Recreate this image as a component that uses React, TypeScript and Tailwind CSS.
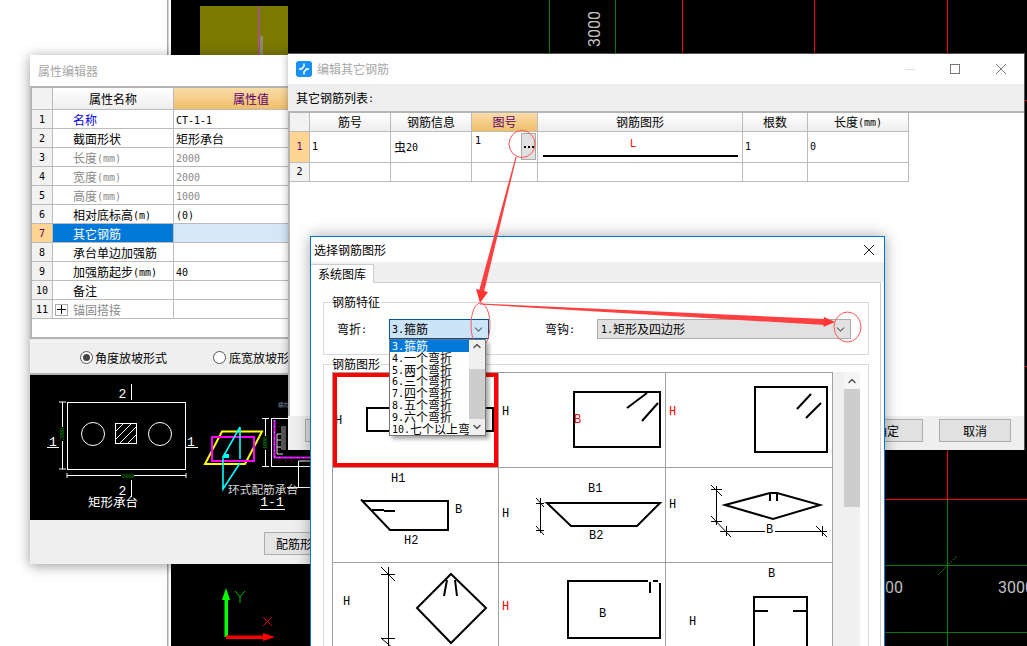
import type { ReactNode } from "react";
import { ChevronDown, ChevronUp } from "lucide-react";

// SimSun-like metrics: latin glyphs are half the width of a 12px CJK glyph
function Mix({ text }: { text: string }) {
  const parts = text.split(/([\x00-\x7f]+)/).filter(Boolean);
  return (
    <>
      {parts.map((p, i) =>
        /^[\x00-\x7f]/.test(p) ? (
          <span key={i} className="whitespace-pre align-[1px] text-[10px] [font-family:'DejaVu_Sans_Mono',monospace]">
            {p}
          </span>
        ) : (
          <span key={i}>{p}</span>
        ),
      )}
    </>
  );
}

const props = [
  { name: "名称", value: "CT-1-1", nameCls: "text-[#0000ee]" },
  { name: "截面形状", value: "矩形承台" },
  { name: "长度(mm)", value: "2000", nameCls: "text-[#8a8a8a]", valCls: "text-[#8a8a8a]" },
  { name: "宽度(mm)", value: "2000", nameCls: "text-[#8a8a8a]", valCls: "text-[#8a8a8a]" },
  { name: "高度(mm)", value: "1000", nameCls: "text-[#8a8a8a]", valCls: "text-[#8a8a8a]" },
  { name: "相对底标高(m)", value: "(0)" },
  { name: "其它钢筋", value: "", active: true },
  { name: "承台单边加强筋", value: "" },
  { name: "加强筋起步(mm)", value: "40" },
  { name: "备注", value: "" },
  { name: "锚固搭接", value: "", nameCls: "text-[#8a8a8a]", plus: true },
];

const editHeaders = ["筋号", "钢筋信息", "图号", "钢筋图形", "根数", "长度(mm)"];

const bends = ["3.箍筋", "4.一个弯折", "5.两个弯折", "6.三个弯折", "7.四个弯折", "8.五个弯折", "9.六个弯折", "10.七个以上弯折"];

function CadBackground() {
  return (
    <svg className="absolute inset-0" width="1027" height="646" viewBox="0 0 1027 646">
      <rect x="167" y="0" width="1.5" height="646" fill="#a8a8a8" />
      <rect x="171" y="0" width="856" height="646" fill="#000" />
      <rect x="200" y="6" width="88" height="50" fill="#7a7a00" />
      <rect x="258" y="6" width="1.5" height="50" fill="#b04a9a" />
      <rect x="260" y="36" width="3" height="20" fill="#8c8c6a" />
      <path d="M549.5 0V54M615.5 0V54" stroke="#0a7a0a" />
      <path d="M682.5 0V54M814.5 0V54M947.5 0V54" stroke="#ff0000" />
      <path d="M1024 100.5H1027M1024 366.5H1027" stroke="#ff0000" />
      <text x="0" y="0" transform="translate(600 47) rotate(-90)" fontSize="16" fill="#c4c4c4" fontFamily="Roboto, sans-serif">
        3000
      </text>
      <path d="M885 499.5H1027M947.5 450V499" stroke="#ff0000" />
      <path d="M885 565.5H1027M885 632.5H1027M947.5 499V646" stroke="#0a7a0a" />
      <path d="M938 575L957 556" stroke="#0a8a0a" strokeDasharray="2 1" />
      <text x="885" y="593" fontSize="16" fill="#c4c4c4" fontFamily="Roboto, sans-serif">
        00
      </text>
      <text x="998" y="593" fontSize="16" fill="#c4c4c4" fontFamily="Roboto, sans-serif">
        3000
      </text>
      {/* axis marker */}
      <rect x="224.5" y="596" width="3.5" height="41" fill="#00ff00" />
      <path d="M226 588L230 600H222Z" fill="#00ff00" />
      <rect x="226" y="635.5" width="40" height="3.5" fill="#ff0000" />
      <path d="M275 637L263 633V641Z" fill="#ff0000" />
      <path d="M235 591L240 597L245 591M240 597V603" stroke="#00c800" fill="none" />
      <path d="M263 617L272 626M272 617L263 626" stroke="#e00000" fill="none" />
    </svg>
  );
}

function PreviewDrawing() {
  return (
    <svg className="block shrink-0 bg-black" width="282" height="145" viewBox="30 375 282 145">
      <g stroke="#fff" fill="none">
        <rect x="67.5" y="402.5" width="118" height="67" />
        <circle cx="93" cy="434" r="11.5" />
        <circle cx="160" cy="434" r="11.5" />
        <rect x="115.5" y="423.5" width="21" height="20" />
        <path d="M116 431L123 424M116 439L131 424M120 443L136 427M128 443L136 435" />
        <path d="M131.5 384V400M131.5 480V497M47 447.5H59M186 447.5H198" />
        <path d="M62.5 402V469M59 402H66M59 469H66M67 475.5H186M67 473V478M186 473V478" />
      </g>
      <g fill="#fff" fontSize="13" fontFamily="Liberation Mono, monospace" textAnchor="middle">
        <text x="122.5" y="398">2</text>
        <text x="122.5" y="495">2</text>
        <text x="53" y="446">1</text>
        <text x="191" y="446">1</text>
      </g>
      <text x="88" y="507" fill="#fff" fontSize="12.5" fontFamily="Noto Sans CJK SC, sans-serif">
        矩形承台
      </text>
      <rect x="121" y="473" width="13" height="5" fill="#000" />
      <text x="122" y="478" fill="#0c9a0c" fontSize="5" fontFamily="Liberation Mono, monospace">
        2000
      </text>
      <rect x="60" y="427" width="5" height="14" fill="#000" />
      <text x="0" y="0" transform="translate(64 440) rotate(-90)" fill="#0c9a0c" fontSize="5" fontFamily="Liberation Mono, monospace">
        2000
      </text>
      <path d="M222 431.5H262L245 464H205Z" stroke="#ffff00" strokeWidth="2" fill="none" />
      <rect x="212" y="437" width="42" height="24" stroke="#ff00ff" strokeWidth="2" fill="none" />
      <path d="M240 427V459M240 427L223 457V489L240 463" stroke="#00ffff" strokeWidth="1.6" fill="none" />
      <rect x="224" y="454" width="5" height="4" fill="#00ffff" />
      <g stroke="#fff" fill="none">
        <rect x="271.5" y="418.5" width="60" height="48" />
        <path d="M265.5 418V467M262 418.5H269M262 466.5H269" />
        <path d="M298.5 461V487M298.5 461H320M260 509.5H285M287 487.5H320" />
      </g>
      <rect x="263" y="436" width="5" height="14" fill="#000" />
      <text x="0" y="0" transform="translate(267 449) rotate(-90)" fill="#0c9a0c" fontSize="5" fontFamily="Liberation Mono, monospace">
        1000
      </text>
      <path d="M274.5 420V457.5H320" stroke="#ff00ff" strokeWidth="2" fill="none" />
      <path d="M274.5 420V457.5H320" stroke="#00ffff" strokeDasharray="1 5" fill="none" />
      <path d="M283 434H277V454H283M277 440H283M277 447H283" stroke="#ddd" fill="none" />
      <rect x="281" y="426" width="5" height="24" fill="#555" />
      <text x="278" y="407" fill="#8a9ab0" fontSize="5.5" fontFamily="Noto Sans CJK SC, sans-serif">
        横向
      </text>
      <text x="228" y="494" fill="#d8d8d8" fontSize="11.7" fontFamily="Noto Sans CJK SC, sans-serif">
        环式配筋承台
      </text>
      <text x="272" y="506" fill="#fff" fontSize="13" fontFamily="Liberation Mono, monospace" textAnchor="middle">
        1-1
      </text>
    </svg>
  );
}

function PropertyWindow() {
  return (
    <div className="absolute left-[30px] top-[55px] flex h-[509px] w-[282px] flex-col bg-[#efefef] shadow-[0_2px_12px_rgba(0,0,0,0.4)]">
      <div className="flex h-[31px] shrink-0 items-center bg-white pl-2 text-[#a8a8a8]">属性编辑器</div>
      <div className="h-[253px] shrink-0 border-y-2 border-l-2 border-[#b4b4b4] bg-white">
        <div className="grid grid-cols-[21px_121px_1fr]">
          <div className="h-[22px] border-r border-b border-[#bbb] bg-[#f2f2f2]" />
          <div className="flex h-[22px] items-center justify-center border-r border-b border-[#bbb] bg-gradient-to-b from-white to-[#eeeeee]">
            属性名称
          </div>
          <div className="flex h-[22px] items-center border-b border-[#bbb] bg-gradient-to-b from-[#fbdca8] to-[#eebf68] pl-[59px] text-[#5c0070]">
            属性值
          </div>
          {props.map((r, i) => (
            <div key={r.name} className="contents">
              <div
                className={`flex h-[19px] items-center justify-center border-r border-b border-[#bbb] pt-px ${r.active ? "bg-[#ffd591] text-[#5c0070]" : "bg-[#f2f2f2]"}`}
              >
                <Mix text={String(i + 1)} />
              </div>
              <div
                className={`flex h-[19px] items-center border-r border-b border-[#bbb] pt-px ${r.active ? "bg-[#0078d7] text-white" : r.nameCls ?? ""} ${r.plus ? "pl-[2px]" : "pl-5"}`}
              >
                {r.plus && (
                  <span className="mr-[5px] flex h-[12px] w-[13px] items-center justify-center border border-[#aaa] text-black">
                    <svg width="9" height="9" viewBox="0 0 9 9">
                      <path d="M0 4.5H9M4.5 0V9" stroke="#000" />
                    </svg>
                  </span>
                )}
                <span>
                  <Mix text={r.name} />
                </span>
              </div>
              <div className={`flex h-[19px] items-center border-b border-[#bbb] pl-[2px] pt-px ${r.active ? "bg-[#d6e8f7]" : ""} ${r.valCls ?? ""}`}>
                <span>
                  <Mix text={r.value} />
                </span>
              </div>
            </div>
          ))}
        </div>
      </div>
      <div className="mt-[2px] flex h-[34px] shrink-0 items-center border-t border-b-2 border-t-[#f8f8f8] border-b-[#b4b4b4] pl-[50px]">
        <span className="flex items-center justify-center rounded-full border border-[#555] bg-white p-[2px]">
          <span className="h-[7px] w-[7px] rounded-full bg-[#444]" />
        </span>
        <span className="ml-[1px] w-[119px] pl-[1px]">角度放坡形式</span>
        <span className="h-[13px] w-[13px] shrink-0 rounded-full border border-[#555] bg-white" />
        <span className="ml-[3px] whitespace-nowrap">底宽放坡形式</span>
      </div>
      <PreviewDrawing />
      <div className="flex flex-1 items-start pl-[234px] pt-3">
        <button className="flex h-[23px] w-[72px] shrink-0 items-center justify-center border border-[#adadad] bg-[#e5e5e5]">配筋形式</button>
      </div>
    </div>
  );
}

function EditWindow() {
  return (
    <div className="absolute left-[288px] top-[53px] flex h-[397px] w-[737px] flex-col border-t border-r border-[#555] bg-white shadow-[0_0_8px_rgba(0,0,0,0.3)]">
      <div className="flex h-[30px] shrink-0 items-center bg-white pl-2">
        <svg width="16" height="16" viewBox="0 0 16 16">
          <rect width="16" height="16" rx="3" fill="#1890f5" />
          <path d="M8 2.5V6M8 10V13.5M3 8H6.5M9.5 8H13M8 6C6.5 6 6 7 6 8M8 10C9.5 10 10 9 10 8" stroke="#fff" strokeWidth="1.5" fill="none" />
        </svg>
        <span className="ml-[5px] text-[#a8a8a8]">编辑其它钢筋</span>
        <div className="ml-auto flex items-center pr-[18px]">
          <span className="mr-[35px] h-px w-[10px] bg-[#ddd]" />
          <span className="mr-[36px] h-[10px] w-[10px] border border-[#777]" />
          <svg width="10" height="10" viewBox="0 0 10 10">
            <path d="M0 0L10 10M10 0L0 10" stroke="#777" />
          </svg>
        </div>
      </div>
      <div className="flex h-[27px] shrink-0 items-center bg-[#efefef] pl-2">
        <span>
          <Mix text="其它钢筋列表:" />
        </span>
      </div>
      <div className="flex-1 border-t-2 border-l-2 border-[#b4b4b4]">
        <div className="grid w-[619px] grid-cols-[20px_81px_81px_66px_205px_65px_101px]">
          <div className="h-[19px] border-r border-b border-[#bbb] bg-[#f2f2f2]" />
          {editHeaders.map((h) => (
            <div
              key={h}
              className={`flex h-[19px] items-center justify-center border-r border-b border-[#bbb] bg-gradient-to-b ${h === "图号" ? "from-[#fbdca8] to-[#eebf68] text-[#5c0070]" : "from-white to-[#eeeeee]"}`}
            >
              <span>
                <Mix text={h} />
              </span>
            </div>
          ))}
          <div className="flex h-[31px] items-center justify-center border-r border-b border-[#bbb] bg-[#ffd591] text-[#5c0070]">
            <Mix text="1" />
          </div>
          <div className="flex h-[31px] items-center border-r border-b border-[#bbb] pl-[2px]">
            <Mix text="1" />
          </div>
          <div className="flex h-[31px] items-center border-r border-b border-[#bbb] pl-[3px]">
            <span>
              <Mix text="虫20" />
            </span>
          </div>
          <div className="relative h-[31px] border-r border-b border-[#bbb] pl-[3px] pt-[2px]">
            <Mix text="1" />
            <span className="absolute right-[1px] top-[1px] flex h-[27px] w-[15px] items-center justify-center gap-[2px] border border-[#aaa] bg-[#e1e1e1]">
              <span className="h-[2px] w-[2px] bg-black" />
              <span className="h-[2px] w-[2px] bg-black" />
              <span className="h-[2px] w-[2px] bg-black" />
            </span>
          </div>
          <div className="flex h-[31px] flex-col items-center border-r border-b border-[#bbb] pt-[5px]">
            <span className="h-[18px] pr-[14px] text-[#f00]">
              <Mix text="L" />
            </span>
            <span className="h-[2px] w-[195px] bg-black" />
          </div>
          <div className="flex h-[31px] items-center border-r border-b border-[#bbb] pl-[2px]">
            <Mix text="1" />
          </div>
          <div className="flex h-[31px] items-center border-r border-b border-[#bbb] pl-[2px]">
            <Mix text="0" />
          </div>
          <div className="flex h-[19px] items-center justify-center border-r border-b border-[#bbb] bg-[#f2f2f2]">
            <Mix text="2" />
          </div>
          {[0, 1, 2, 3, 4, 5].map((i) => (
            <div key={i} className="h-[19px] border-r border-b border-[#bbb]" />
          ))}
        </div>
      </div>
      <div className="flex h-[34px] shrink-0 items-start bg-[#efefef] pt-[3px]">
        <button className="ml-[17px] h-[23px] w-[72px] border border-[#adadad] bg-[#e1e1e1]" />
        <button className="ml-[474px] flex h-[23px] w-[72px] items-center justify-center border border-[#adadad] bg-[#e1e1e1]">确定</button>
        <button className="ml-[16px] flex h-[23px] w-[72px] items-center justify-center border border-[#adadad] bg-[#e1e1e1]">取消</button>
      </div>
    </div>
  );
}

function Cell({ x, y, w, h = 94, children }: { x: number; y: number; w: number; h?: number; children: ReactNode }) {
  return (
    <div className="border-r border-b border-[#a0a0a0]">
      <svg className="block" width={w} height={h} viewBox={`${x} ${y} ${w} ${h}`} fontFamily="Liberation Mono, monospace" fontSize="12">
        {children}
      </svg>
    </div>
  );
}

const bar = { stroke: "#000", strokeWidth: 2, fill: "none" };
const thin = { stroke: "#000", strokeWidth: 1, fill: "none" };

function ShapeGrid() {
  return (
    <div className="grid grid-cols-[166px_167px_167px] border-t border-l border-[#a0a0a0]">
      <Cell x={333} y={373} w={165}>
        <path d="M367 408H493V431H367Z" {...bar} />
        <text x="335" y="424">H</text>
        <rect x="335" y="375" width="161" height="90" fill="none" stroke="#f00" strokeWidth="4" />
      </Cell>
      <Cell x={499} y={373} w={166}>
        <text x="502" y="415">H</text>
        <text x="574" y="423" fill="#f00">B</text>
        <path d="M574 392H660V447H574Z" {...bar} />
        <path d="M627 408L647 393M642 421L658 403" {...bar} />
      </Cell>
      <Cell x={666} y={373} w={166}>
        <text x="669" y="415" fill="#f00">H</text>
        <path d="M755 387H827V452H755Z" {...bar} />
        <path d="M797 409L811 394M806 418L821 403" {...bar} />
      </Cell>

      <Cell x={333} y={468} w={165}>
        <text x="391" y="482">H1</text>
        <text x="455" y="513">B</text>
        <text x="404" y="544">H2</text>
        <path d="M361 499.5L390 530H448V501H363" {...bar} />
        <path d="M372 510H384M384 511H395" {...bar} />
      </Cell>
      <Cell x={499} y={468} w={166}>
        <text x="588" y="492">B1</text>
        <text x="589" y="539">B2</text>
        <text x="502" y="517">H</text>
        <path d="M547 503L571 526H637L660 503Z" {...bar} />
        <path d="M540.5 498V533M536 503.5H544M536 530.5H544M536 498L544 507M536 526L544 535" {...thin} />
      </Cell>
      <Cell x={666} y={468} w={166}>
        <text x="669" y="508">H</text>
        <text x="766" y="533">B</text>
        <path d="M725 505L770 493H777L820 505L773 519Z" {...bar} />
        <path d="M770 493V501M777 493V501" {...bar} />
        <path d="M716.5 486V525M711 489.5H722M711 521.5H722M711 485L722 496M711 516L731 537M720 531.5H765M775 531.5H827M726.5 526V536M822.5 526V536M816 526L827 537" {...thin} />
      </Cell>

      <Cell x={333} y={563} w={165}>
        <text x="343" y="605">H</text>
        <path d="M388.5 567V646M381 574.5H395M381 638.5H395M381 567L395 581M381 638L395 650" {...thin} />
        <path d="M451 574L486 608L451 643L417 608Z" {...bar} />
        <path d="M447 580L444 596M455 580L457 596" {...bar} />
      </Cell>
      <Cell x={499} y={563} w={166}>
        <text x="502" y="610" fill="#f00">H</text>
        <text x="599" y="617">B</text>
        <path d="M648 581H568V638H660V583" {...bar} />
        <path d="M653 581H658M650 582V593" {...bar} />
      </Cell>
      <Cell x={666} y={563} w={166}>
        <text x="768" y="577">B</text>
        <text x="689" y="625">H</text>
        <path d="M754 660V597H807V660" {...bar} />
        <path d="M754 611H768M793 611H807" {...bar} />
      </Cell>
    </div>
  );
}

function SelectDialog() {
  return (
    <div className="absolute left-[310px] top-[236px] flex h-[420px] w-[575px] flex-col border border-[#0078d7] bg-white shadow-[0_0_14px_rgba(0,0,0,0.35)]">
      <div className="flex h-[25px] shrink-0 items-center justify-between pl-[3px] pr-[10px]">
        <span>选择钢筋图形</span>
        <svg width="10" height="10" viewBox="0 0 10 10">
          <path d="M0 0L10 10M10 0L0 10" stroke="#222" />
        </svg>
      </div>
      <div className="flex h-[20px] shrink-0 items-end bg-[#efefef]">
        <div className="relative top-[1px] z-10 flex h-[19px] w-[63px] items-center justify-center border-t border-r border-[#ccc] bg-white">系统图库</div>
      </div>
      <div className="mr-[3px] flex-1 border-t border-r border-[#ccc] pl-3 pr-3 pt-[19px]">
        <div className="relative h-[53px] w-[546px] border border-[#d8d8d8]">
          <span className="absolute -top-[8px] left-[7px] bg-white px-px leading-[14px]">钢筋特征</span>
          <div className="flex items-center pl-[13px] pt-[16px]">
            <span className="w-[52px]">
              <Mix text="弯折:" />
            </span>
            <div className="relative flex h-[20px] w-[100px] items-center justify-between border border-[#005499] bg-[#cce4f7] pl-[2px] pr-[3px]">
              <span>
                <Mix text="3.箍筋" />
              </span>
              <ChevronDown size={13} className="text-[#666]" />
              <div className="absolute left-[-1px] top-[19px] z-10 flex h-[97px] w-[97px] border border-[#767676] bg-white shadow-[3px_3px_4px_rgba(0,0,0,0.35)]">
                <div className="w-[79px] overflow-hidden">
                  {bends.map((b, i) => (
                    <div key={b} className={`h-[11.8px] whitespace-nowrap pl-[2px] leading-[12px] ${i === 0 ? "bg-[#0078d7] text-white" : ""}`}>
                      <Mix text={b} />
                    </div>
                  ))}
                </div>
                <div className="flex w-[16px] flex-col bg-[#f0f0f0]">
                  <div className="flex h-[29px] justify-center">
                    <ChevronUp size={12} strokeWidth={3} className="text-[#555]" />
                  </div>
                  <div className="h-[50px] bg-[#cdcdcd]" />
                  <div className="flex flex-1 items-center justify-center">
                    <ChevronDown size={12} strokeWidth={3} className="text-[#555]" />
                  </div>
                </div>
              </div>
            </div>
            <span className="ml-[56px] w-[52px]">
              <Mix text="弯钩:" />
            </span>
            <div className="flex h-[20px] w-[254px] items-center justify-between border border-[#adadad] bg-[#e1e1e1] pl-[3px] pr-[3px]">
              <span>
                <Mix text="1.矩形及四边形" />
              </span>
              <ChevronDown size={13} className="text-[#666]" />
            </div>
          </div>
        </div>
        <div className="relative mt-[9px] h-[300px] w-[546px] border border-[#d8d8d8] pl-2 pt-[7px]">
          <span className="absolute -top-[8px] left-[7px] bg-white px-px leading-[14px]">钢筋图形</span>
          <div className="flex">
            <ShapeGrid />
            <div className="w-[11px] bg-[#f0f0f0]" />
            <div className="flex w-[16px] flex-col bg-[#f0f0f0]">
              <div className="flex h-[17px] items-center justify-center bg-[#f6f6f6]">
                <ChevronUp size={12} strokeWidth={3} className="text-[#555]" />
              </div>
              <div className="h-[118px] bg-[#cdcdcd]" />
            </div>
          </div>
        </div>
      </div>
    </div>
  );
}

// the red markup drawn over the screenshot
function Annotations() {
  return (
    <svg className="pointer-events-none absolute inset-0" width="1027" height="646" viewBox="0 0 1027 646">
      <g stroke="#f55" fill="none">
        <ellipse cx="522" cy="144" rx="13" ry="13.5" />
        <ellipse cx="480.5" cy="325" rx="9.5" ry="22" />
        <ellipse cx="847.5" cy="327" rx="13.5" ry="15" />
      </g>
      <path d="M515.5 157L516.6 157L484 292L479 291Z" fill="#ff4040" />
      <path d="M480 303L476 289L488 292Z" fill="#ff3535" />
      <path d="M480 303.5L480 304.5L825 325L825 319Z" fill="#ff4040" />
      <path d="M835 322L824 317L823.5 327Z" fill="#ff3535" />
    </svg>
  );
}

export default function App() {
  return (
    <div className="relative h-[646px] w-[1027px] overflow-hidden bg-white text-[12px] leading-none text-black [font-family:'Noto_Sans_CJK_SC',sans-serif]">
      <CadBackground />
      <PropertyWindow />
      <EditWindow />
      <SelectDialog />
      <Annotations />
    </div>
  );
}
